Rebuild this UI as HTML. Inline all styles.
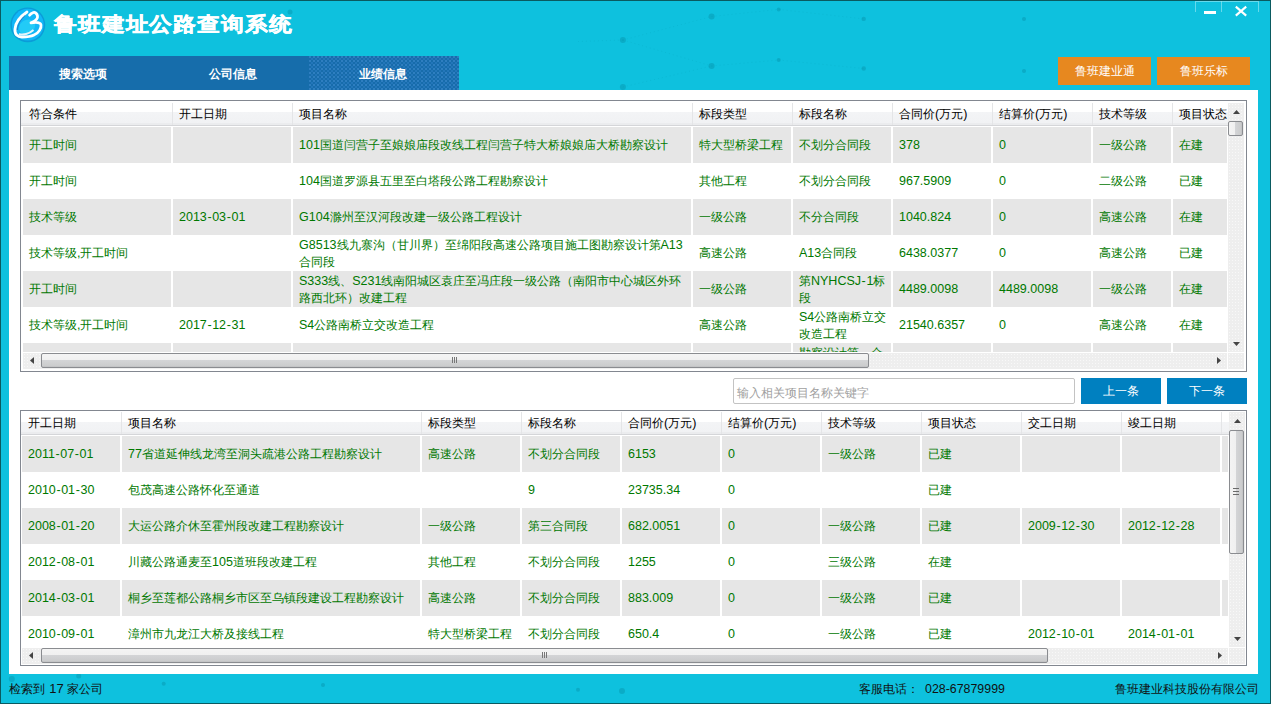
<!DOCTYPE html><html><head><meta charset="utf-8"><style>
*{margin:0;padding:0;box-sizing:border-box}
html,body{width:1271px;height:704px;overflow:hidden;background:#0ec1de}
body{position:relative;font-family:"Liberation Sans",sans-serif;font-size:12px;color:#000}
.abs{position:absolute}
.a{font-size:12.5px}
.hy{padding:0 0.6px}
.title{position:absolute;left:54px;top:13px;color:#fff;font-weight:bold;font-size:23px;letter-spacing:0.85px;line-height:26px;white-space:nowrap;transform:scale(1,0.88);transform-origin:0 0;-webkit-text-stroke:0.5px #fff}
.tab{position:absolute;top:56px;height:34px;width:150px;color:#fff;font-weight:bold;font-size:12px;line-height:37px;text-align:center;background:#166dab;text-indent:-2px}
.tab.sel{background-color:#176cab;background-image:radial-gradient(circle at 1px 1px,rgba(80,155,225,.55) 0.6px,transparent 1px),radial-gradient(circle at 3px 3px,rgba(60,140,215,.45) 0.6px,transparent 1px);background-size:4px 4px}
.obtn{position:absolute;top:57px;width:93px;height:28px;background:#e7881f;color:#fff;font-size:12px;line-height:28px;text-align:center}
.box{position:absolute;border:1px solid #828790;background:#fff}
.clip{position:absolute;overflow:hidden}
.hdr{position:absolute;background:linear-gradient(#fff 0,#fff 11px,#f3f4f6 11px,#f1f2f4 22px,#ebecee 22px,#ebecee 24px,#d5d6d9 24px,#d5d6d9 25px,#fff 25px)}
.hsep{position:absolute;width:1px;background:#e4e5e7}
.ht{position:absolute;white-space:nowrap;line-height:16px;color:#000}
.cell{position:absolute;background:#e6e6e6}
.ct{position:absolute;white-space:nowrap;line-height:16px;color:#007800}
.trk{position:absolute;background-color:#eeeeee;background-image:radial-gradient(circle,rgba(255,255,255,.6) 0.5px,transparent 0.9px);background-size:3px 3px;}
.thumbh{position:absolute;border:1px solid #8a8c90;border-radius:2px;background:linear-gradient(#f4f4f4 0,#f0f0f0 6px,#d4d5d7 6px,#cbcccd 12px,#bcbdbf 13px)}
.thumbv{position:absolute;border:1px solid #8a8c90;border-radius:2px;background:linear-gradient(90deg,#f4f4f4 0,#f0f0f0 6px,#d4d5d7 6px,#cbcccd 12px,#bcbdbf 13px)}
.status{position:absolute;top:681px;line-height:16px;color:#111;white-space:nowrap}
</style></head><body><div class="abs" style="left:0;top:0;width:1271px;height:704px;border:1px solid #0a5a60"></div><svg class="abs" style="left:0;top:0" width="1271" height="704"><circle cx="711.6" cy="16.5" r="3.0" fill="rgba(0,120,140,.28)"/><circle cx="622.9" cy="40.0" r="3.0" fill="rgba(0,120,140,.28)"/><circle cx="778.7" cy="9.4" r="2.0" fill="rgba(0,120,140,.28)"/><circle cx="863.7" cy="18.9" r="2.2" fill="rgba(0,120,140,.28)"/><circle cx="778.7" cy="60.0" r="2.0" fill="rgba(0,120,140,.28)"/><circle cx="711.6" cy="66.0" r="3.0" fill="rgba(0,120,140,.28)"/><circle cx="863.7" cy="68.5" r="2.2" fill="rgba(0,120,140,.28)"/><circle cx="622.9" cy="87.0" r="3.0" fill="rgba(0,120,140,.28)"/><circle cx="1024.0" cy="19.0" r="2.0" fill="rgba(0,120,140,.28)"/><circle cx="1024.0" cy="71.0" r="2.0" fill="rgba(0,120,140,.28)"/><circle cx="290.0" cy="12.0" r="2.5" fill="rgba(0,120,140,.28)"/><circle cx="163.7" cy="683.8" r="2.0" fill="rgba(0,120,140,.28)"/><circle cx="323.0" cy="685.0" r="2.0" fill="rgba(0,120,140,.28)"/><circle cx="622.0" cy="691.0" r="3.0" fill="rgba(0,120,140,.28)"/><circle cx="578.0" cy="689.7" r="2.0" fill="rgba(0,120,140,.28)"/><circle cx="11.8" cy="679.0" r="3.0" fill="rgba(0,120,140,.28)"/><circle cx="78.7" cy="676.0" r="2.5" fill="rgba(0,120,140,.28)"/><line x1="622.9" y1="40.0" x2="711.6" y2="16.5" stroke="rgba(0,120,140,.12)" stroke-width="1" stroke-dasharray="1 3"/><line x1="622.9" y1="40.0" x2="711.6" y2="66.0" stroke="rgba(0,120,140,.12)" stroke-width="1" stroke-dasharray="1 3"/><line x1="711.6" y1="16.5" x2="778.7" y2="9.4" stroke="rgba(0,120,140,.12)" stroke-width="1" stroke-dasharray="1 3"/><line x1="711.6" y1="66.0" x2="778.7" y2="60.0" stroke="rgba(0,120,140,.12)" stroke-width="1" stroke-dasharray="1 3"/><line x1="778.7" y1="9.4" x2="863.7" y2="18.9" stroke="rgba(0,120,140,.12)" stroke-width="1" stroke-dasharray="1 3"/><line x1="778.7" y1="60.0" x2="863.7" y2="68.5" stroke="rgba(0,120,140,.12)" stroke-width="1" stroke-dasharray="1 3"/><line x1="622.9" y1="40.0" x2="578.0" y2="41.5" stroke="rgba(0,120,140,.12)" stroke-width="1" stroke-dasharray="1 3"/><line x1="622.9" y1="87.0" x2="711.6" y2="66.0" stroke="rgba(0,120,140,.12)" stroke-width="1" stroke-dasharray="1 3"/></svg><svg class="abs" style="left:8px;top:6px" width="40" height="38" viewBox="0 0 40 38">
<circle cx="19.8" cy="18.9" r="17.4" fill="#0b9cd8"/>
<circle cx="19.8" cy="18.7" r="15.9" fill="#12b7f7"/>
<ellipse cx="19" cy="21" rx="8.5" ry="7" fill="#22cbf7" transform="rotate(-35 19 21)"/>
<path d="M19,6 C13,10 7.5,16 7,23 C6.5,28.5 9.5,31 14,31 C19,31 23,30.5 26,29 C31,27 33.5,22 33,19 C32.5,16.5 28,16 23,16.8 C26.5,15.5 30,13 29.5,10 C29,7.5 27,6 25.4,6.5 C24,7 22.5,8 21.6,9.2" stroke="#fff" stroke-width="2.8" fill="none" stroke-linecap="round" stroke-linejoin="round"/>
<path d="M9.3,24 C9.8,19 12.5,13.5 17,9.5" stroke="#3a4f9a" stroke-width="0.8" fill="none" opacity="0.7"/>
<path d="M11,28 C15,29.5 21,28 25.5,24" stroke="#e4f4fa" stroke-width="2" fill="none"/>
</svg><div class="title">鲁班建址公路查询系统</div><div class="abs" style="left:1195px;top:1px;width:64px;height:11px;border:1px solid rgba(160,235,245,.6);border-bottom:none"></div><div class="abs" style="left:1221px;top:1px;width:1px;height:11px;background:rgba(160,235,245,.6)"></div><div class="abs" style="left:1204px;top:11px;width:12px;height:3px;background:#fff"></div><svg class="abs" style="left:1234px;top:5px" width="14" height="12" viewBox="0 0 14 12"><path d="M1.8 1.6 L12.2 10.6 M12.2 1.6 L1.8 10.6" stroke="#fff" stroke-width="2.1"/></svg><div class="tab" style="left:9px">搜索选项</div><div class="tab" style="left:159px">公司信息</div><div class="tab sel" style="left:309px">业绩信息</div><div class="obtn" style="left:1058px">鲁班建业通</div><div class="obtn" style="left:1157px">鲁班乐标</div><div class="abs" style="left:9px;top:90px;width:1249px;height:584px;background:#fff"></div><div class="box" style="left:20px;top:100px;width:1227px;height:272px"></div><div class="abs" style="left:21px;top:101px;width:1207px;height:26px;background:linear-gradient(#fff 0,#fff 11px,#f3f4f6 11px,#f1f2f4 22px,#ebecee 22px,#ebecee 24px,#d5d6d9 24px,#d5d6d9 25px,#fff 25px)"></div><div class="ht" style="left:29px;top:106px">符合条件</div><div class="hsep" style="left:172px;top:103px;height:22px"></div><div class="ht" style="left:179px;top:106px">开工日期</div><div class="hsep" style="left:292px;top:103px;height:22px"></div><div class="ht" style="left:299px;top:106px">项目名称</div><div class="hsep" style="left:692px;top:103px;height:22px"></div><div class="ht" style="left:699px;top:106px">标段类型</div><div class="hsep" style="left:792px;top:103px;height:22px"></div><div class="ht" style="left:799px;top:106px">标段名称</div><div class="hsep" style="left:892px;top:103px;height:22px"></div><div class="ht" style="left:899px;top:106px">合同价<span class="a">(</span>万元<span class="a">)</span></div><div class="hsep" style="left:992px;top:103px;height:22px"></div><div class="ht" style="left:999px;top:106px">结算价<span class="a">(</span>万元<span class="a">)</span></div><div class="hsep" style="left:1092px;top:103px;height:22px"></div><div class="ht" style="left:1099px;top:106px">技术等级</div><div class="hsep" style="left:1172px;top:103px;height:22px"></div><div class="ht" style="left:1179px;top:106px">项目状态</div><div class="clip" style="left:21px;top:127px;width:1206px;height:225px"><div class="cell" style="left:2px;top:0px;width:148px;height:36px"></div><div class="ct" style="left:8px;top:10px">开工时间</div><div class="cell" style="left:152px;top:0px;width:118px;height:36px"></div><div class="cell" style="left:272px;top:0px;width:398px;height:36px"></div><div class="ct" style="left:278px;top:10px"><span class="a">101</span>国道闫营子至娘娘庙段改线工程闫营子特大桥娘娘庙大桥勘察设计</div><div class="cell" style="left:672px;top:0px;width:98px;height:36px"></div><div class="ct" style="left:678px;top:10px">特大型桥梁工程</div><div class="cell" style="left:772px;top:0px;width:98px;height:36px"></div><div class="ct" style="left:778px;top:10px">不划分合同段</div><div class="cell" style="left:872px;top:0px;width:98px;height:36px"></div><div class="ct" style="left:878px;top:10px"><span class="a">378</span></div><div class="cell" style="left:972px;top:0px;width:98px;height:36px"></div><div class="ct" style="left:978px;top:10px"><span class="a">0</span></div><div class="cell" style="left:1072px;top:0px;width:78px;height:36px"></div><div class="ct" style="left:1078px;top:10px">一级公路</div><div class="cell" style="left:1152px;top:0px;width:78px;height:36px"></div><div class="ct" style="left:1158px;top:10px">在建</div><div class="ct" style="left:8px;top:46px">开工时间</div><div class="ct" style="left:278px;top:46px"><span class="a">104</span>国道罗源县五里至白塔段公路工程勘察设计</div><div class="ct" style="left:678px;top:46px">其他工程</div><div class="ct" style="left:778px;top:46px">不划分合同段</div><div class="ct" style="left:878px;top:46px"><span class="a">967.5909</span></div><div class="ct" style="left:978px;top:46px"><span class="a">0</span></div><div class="ct" style="left:1078px;top:46px">二级公路</div><div class="ct" style="left:1158px;top:46px">已建</div><div class="cell" style="left:2px;top:72px;width:148px;height:36px"></div><div class="ct" style="left:8px;top:82px">技术等级</div><div class="cell" style="left:152px;top:72px;width:118px;height:36px"></div><div class="ct" style="left:158px;top:82px"><span class="a">2013<span class="hy">-</span>03<span class="hy">-</span>01</span></div><div class="cell" style="left:272px;top:72px;width:398px;height:36px"></div><div class="ct" style="left:278px;top:82px"><span class="a">G104</span>滁州至汉河段改建一级公路工程设计</div><div class="cell" style="left:672px;top:72px;width:98px;height:36px"></div><div class="ct" style="left:678px;top:82px">一级公路</div><div class="cell" style="left:772px;top:72px;width:98px;height:36px"></div><div class="ct" style="left:778px;top:82px">不分合同段</div><div class="cell" style="left:872px;top:72px;width:98px;height:36px"></div><div class="ct" style="left:878px;top:82px"><span class="a">1040.824</span></div><div class="cell" style="left:972px;top:72px;width:98px;height:36px"></div><div class="ct" style="left:978px;top:82px"><span class="a">0</span></div><div class="cell" style="left:1072px;top:72px;width:78px;height:36px"></div><div class="ct" style="left:1078px;top:82px">高速公路</div><div class="cell" style="left:1152px;top:72px;width:78px;height:36px"></div><div class="ct" style="left:1158px;top:82px">在建</div><div class="ct" style="left:8px;top:118px">技术等级<span class="a">,</span>开工时间</div><div class="ct" style="left:278px;top:110px"><span class="a">G8513</span>线九寨沟（甘川界）至绵阳段高速公路项目施工图勘察设计第<span class="a">A13</span></div><div class="ct" style="left:278px;top:127px">合同段</div><div class="ct" style="left:678px;top:118px">高速公路</div><div class="ct" style="left:778px;top:118px"><span class="a">A13</span>合同段</div><div class="ct" style="left:878px;top:118px"><span class="a">6438.0377</span></div><div class="ct" style="left:978px;top:118px"><span class="a">0</span></div><div class="ct" style="left:1078px;top:118px">高速公路</div><div class="ct" style="left:1158px;top:118px">已建</div><div class="cell" style="left:2px;top:144px;width:148px;height:36px"></div><div class="ct" style="left:8px;top:154px">开工时间</div><div class="cell" style="left:152px;top:144px;width:118px;height:36px"></div><div class="cell" style="left:272px;top:144px;width:398px;height:36px"></div><div class="ct" style="left:278px;top:146px"><span class="a">S333</span>线、<span class="a">S231</span>线南阳城区袁庄至冯庄段一级公路（南阳市中心城区外环</div><div class="ct" style="left:278px;top:163px">路西北环）改建工程</div><div class="cell" style="left:672px;top:144px;width:98px;height:36px"></div><div class="ct" style="left:678px;top:154px">一级公路</div><div class="cell" style="left:772px;top:144px;width:98px;height:36px"></div><div class="ct" style="left:778px;top:146px">第<span class="a">NYHCSJ<span class="hy">-</span>1</span>标</div><div class="ct" style="left:778px;top:163px">段</div><div class="cell" style="left:872px;top:144px;width:98px;height:36px"></div><div class="ct" style="left:878px;top:154px"><span class="a">4489.0098</span></div><div class="cell" style="left:972px;top:144px;width:98px;height:36px"></div><div class="ct" style="left:978px;top:154px"><span class="a">4489.0098</span></div><div class="cell" style="left:1072px;top:144px;width:78px;height:36px"></div><div class="ct" style="left:1078px;top:154px">一级公路</div><div class="cell" style="left:1152px;top:144px;width:78px;height:36px"></div><div class="ct" style="left:1158px;top:154px">在建</div><div class="ct" style="left:8px;top:190px">技术等级<span class="a">,</span>开工时间</div><div class="ct" style="left:158px;top:190px"><span class="a">2017<span class="hy">-</span>12<span class="hy">-</span>31</span></div><div class="ct" style="left:278px;top:190px"><span class="a">S4</span>公路南桥立交改造工程</div><div class="ct" style="left:678px;top:190px">高速公路</div><div class="ct" style="left:778px;top:182px"><span class="a">S4</span>公路南桥立交</div><div class="ct" style="left:778px;top:199px">改造工程</div><div class="ct" style="left:878px;top:190px"><span class="a">21540.6357</span></div><div class="ct" style="left:978px;top:190px"><span class="a">0</span></div><div class="ct" style="left:1078px;top:190px">高速公路</div><div class="ct" style="left:1158px;top:190px">在建</div><div class="cell" style="left:2px;top:216px;width:148px;height:36px"></div><div class="cell" style="left:152px;top:216px;width:118px;height:36px"></div><div class="cell" style="left:272px;top:216px;width:398px;height:36px"></div><div class="cell" style="left:672px;top:216px;width:98px;height:36px"></div><div class="cell" style="left:772px;top:216px;width:98px;height:36px"></div><div class="ct" style="left:778px;top:218px">勘察设计第一合</div><div class="ct" style="left:778px;top:235px">同段</div><div class="cell" style="left:872px;top:216px;width:98px;height:36px"></div><div class="cell" style="left:972px;top:216px;width:98px;height:36px"></div><div class="cell" style="left:1072px;top:216px;width:78px;height:36px"></div><div class="cell" style="left:1152px;top:216px;width:78px;height:36px"></div></div><div class="trk" style="left:1228px;top:103px;width:16px;height:249px"></div><svg class="abs" style="left:1233px;top:110px" width="7" height="4"><polygon points="0,4 3.5,0 7,4" fill="#444"/></svg><svg class="abs" style="left:1233px;top:342px" width="7" height="4"><polygon points="0,0 7,0 3.5,4" fill="#444"/></svg><div class="thumbv" style="left:1228px;top:121px;width:15px;height:15px"></div><div class="trk" style="left:23px;top:353px;width:1204px;height:16px"></div><svg class="abs" style="left:30px;top:357px" width="4" height="7"><polygon points="4,0 4,7 0,3.5" fill="#444"/></svg><svg class="abs" style="left:1217px;top:357px" width="4" height="7"><polygon points="0,0 0,7 4,3.5" fill="#444"/></svg><div class="thumbh" style="left:41px;top:353px;width:828px;height:15px"></div><div class="abs" style="left:452px;top:357px;width:5px;height:6px;border-left:1px solid #777;border-right:1px solid #777"></div><div class="abs" style="left:454px;top:357px;width:1px;height:6px;background:#777"></div><div class="trk" style="left:1228px;top:353px;width:16px;height:16px"></div><div class="box" style="left:20px;top:410px;width:1227px;height:256px"></div><div class="abs" style="left:21px;top:411px;width:1208px;height:25px;background:linear-gradient(#fff 0,#fff 11px,#f3f4f6 11px,#f1f2f4 21px,#ebecee 21px,#ebecee 23px,#d5d6d9 23px,#d5d6d9 24px,#fff 24px)"></div><div class="ht" style="left:28px;top:415px">开工日期</div><div class="hsep" style="left:121px;top:412px;height:22px"></div><div class="ht" style="left:128px;top:415px">项目名称</div><div class="hsep" style="left:421px;top:412px;height:22px"></div><div class="ht" style="left:428px;top:415px">标段类型</div><div class="hsep" style="left:521px;top:412px;height:22px"></div><div class="ht" style="left:528px;top:415px">标段名称</div><div class="hsep" style="left:621px;top:412px;height:22px"></div><div class="ht" style="left:628px;top:415px">合同价<span class="a">(</span>万元<span class="a">)</span></div><div class="hsep" style="left:721px;top:412px;height:22px"></div><div class="ht" style="left:728px;top:415px">结算价<span class="a">(</span>万元<span class="a">)</span></div><div class="hsep" style="left:821px;top:412px;height:22px"></div><div class="ht" style="left:828px;top:415px">技术等级</div><div class="hsep" style="left:921px;top:412px;height:22px"></div><div class="ht" style="left:928px;top:415px">项目状态</div><div class="hsep" style="left:1021px;top:412px;height:22px"></div><div class="ht" style="left:1028px;top:415px">交工日期</div><div class="hsep" style="left:1121px;top:412px;height:22px"></div><div class="ht" style="left:1128px;top:415px">竣工日期</div><div class="hsep" style="left:1221px;top:412px;height:22px"></div><div class="clip" style="left:21px;top:436px;width:1207px;height:211px"><div class="cell" style="left:1px;top:0px;width:98px;height:36px"></div><div class="ct" style="left:7px;top:10px"><span class="a">2011<span class="hy">-</span>07<span class="hy">-</span>01</span></div><div class="cell" style="left:101px;top:0px;width:298px;height:36px"></div><div class="ct" style="left:107px;top:10px"><span class="a">77</span>省道延伸线龙湾至洞头疏港公路工程勘察设计</div><div class="cell" style="left:401px;top:0px;width:98px;height:36px"></div><div class="ct" style="left:407px;top:10px">高速公路</div><div class="cell" style="left:501px;top:0px;width:98px;height:36px"></div><div class="ct" style="left:507px;top:10px">不划分合同段</div><div class="cell" style="left:601px;top:0px;width:98px;height:36px"></div><div class="ct" style="left:607px;top:10px"><span class="a">6153</span></div><div class="cell" style="left:701px;top:0px;width:98px;height:36px"></div><div class="ct" style="left:707px;top:10px"><span class="a">0</span></div><div class="cell" style="left:801px;top:0px;width:98px;height:36px"></div><div class="ct" style="left:807px;top:10px">一级公路</div><div class="cell" style="left:901px;top:0px;width:98px;height:36px"></div><div class="ct" style="left:907px;top:10px">已建</div><div class="cell" style="left:1001px;top:0px;width:98px;height:36px"></div><div class="cell" style="left:1101px;top:0px;width:98px;height:36px"></div><div class="cell" style="left:1201px;top:0px;width:98px;height:36px"></div><div class="ct" style="left:7px;top:46px"><span class="a">2010<span class="hy">-</span>01<span class="hy">-</span>30</span></div><div class="ct" style="left:107px;top:46px">包茂高速公路怀化至通道</div><div class="ct" style="left:507px;top:46px"><span class="a">9</span></div><div class="ct" style="left:607px;top:46px"><span class="a">23735.34</span></div><div class="ct" style="left:707px;top:46px"><span class="a">0</span></div><div class="ct" style="left:907px;top:46px">已建</div><div class="cell" style="left:1px;top:72px;width:98px;height:36px"></div><div class="ct" style="left:7px;top:82px"><span class="a">2008<span class="hy">-</span>01<span class="hy">-</span>20</span></div><div class="cell" style="left:101px;top:72px;width:298px;height:36px"></div><div class="ct" style="left:107px;top:82px">大运公路介休至霍州段改建工程勘察设计</div><div class="cell" style="left:401px;top:72px;width:98px;height:36px"></div><div class="ct" style="left:407px;top:82px">一级公路</div><div class="cell" style="left:501px;top:72px;width:98px;height:36px"></div><div class="ct" style="left:507px;top:82px">第三合同段</div><div class="cell" style="left:601px;top:72px;width:98px;height:36px"></div><div class="ct" style="left:607px;top:82px"><span class="a">682.0051</span></div><div class="cell" style="left:701px;top:72px;width:98px;height:36px"></div><div class="ct" style="left:707px;top:82px"><span class="a">0</span></div><div class="cell" style="left:801px;top:72px;width:98px;height:36px"></div><div class="ct" style="left:807px;top:82px">一级公路</div><div class="cell" style="left:901px;top:72px;width:98px;height:36px"></div><div class="ct" style="left:907px;top:82px">已建</div><div class="cell" style="left:1001px;top:72px;width:98px;height:36px"></div><div class="ct" style="left:1007px;top:82px"><span class="a">2009<span class="hy">-</span>12<span class="hy">-</span>30</span></div><div class="cell" style="left:1101px;top:72px;width:98px;height:36px"></div><div class="ct" style="left:1107px;top:82px"><span class="a">2012<span class="hy">-</span>12<span class="hy">-</span>28</span></div><div class="cell" style="left:1201px;top:72px;width:98px;height:36px"></div><div class="ct" style="left:7px;top:118px"><span class="a">2012<span class="hy">-</span>08<span class="hy">-</span>01</span></div><div class="ct" style="left:107px;top:118px">川藏公路通麦至<span class="a">105</span>道班段改建工程</div><div class="ct" style="left:407px;top:118px">其他工程</div><div class="ct" style="left:507px;top:118px">不划分合同段</div><div class="ct" style="left:607px;top:118px"><span class="a">1255</span></div><div class="ct" style="left:707px;top:118px"><span class="a">0</span></div><div class="ct" style="left:807px;top:118px">三级公路</div><div class="ct" style="left:907px;top:118px">在建</div><div class="cell" style="left:1px;top:144px;width:98px;height:36px"></div><div class="ct" style="left:7px;top:154px"><span class="a">2014<span class="hy">-</span>03<span class="hy">-</span>01</span></div><div class="cell" style="left:101px;top:144px;width:298px;height:36px"></div><div class="ct" style="left:107px;top:154px">桐乡至莲都公路桐乡市区至乌镇段建设工程勘察设计</div><div class="cell" style="left:401px;top:144px;width:98px;height:36px"></div><div class="ct" style="left:407px;top:154px">高速公路</div><div class="cell" style="left:501px;top:144px;width:98px;height:36px"></div><div class="ct" style="left:507px;top:154px">不划分合同段</div><div class="cell" style="left:601px;top:144px;width:98px;height:36px"></div><div class="ct" style="left:607px;top:154px"><span class="a">883.009</span></div><div class="cell" style="left:701px;top:144px;width:98px;height:36px"></div><div class="ct" style="left:707px;top:154px"><span class="a">0</span></div><div class="cell" style="left:801px;top:144px;width:98px;height:36px"></div><div class="ct" style="left:807px;top:154px">一级公路</div><div class="cell" style="left:901px;top:144px;width:98px;height:36px"></div><div class="ct" style="left:907px;top:154px">已建</div><div class="cell" style="left:1001px;top:144px;width:98px;height:36px"></div><div class="cell" style="left:1101px;top:144px;width:98px;height:36px"></div><div class="cell" style="left:1201px;top:144px;width:98px;height:36px"></div><div class="ct" style="left:7px;top:190px"><span class="a">2010<span class="hy">-</span>09<span class="hy">-</span>01</span></div><div class="ct" style="left:107px;top:190px">漳州市九龙江大桥及接线工程</div><div class="ct" style="left:407px;top:190px">特大型桥梁工程</div><div class="ct" style="left:507px;top:190px">不划分合同段</div><div class="ct" style="left:607px;top:190px"><span class="a">650.4</span></div><div class="ct" style="left:707px;top:190px"><span class="a">0</span></div><div class="ct" style="left:807px;top:190px">一级公路</div><div class="ct" style="left:907px;top:190px">已建</div><div class="ct" style="left:1007px;top:190px"><span class="a">2012<span class="hy">-</span>10<span class="hy">-</span>01</span></div><div class="ct" style="left:1107px;top:190px"><span class="a">2014<span class="hy">-</span>01<span class="hy">-</span>01</span></div></div><div class="trk" style="left:1229px;top:412px;width:16px;height:235px"></div><svg class="abs" style="left:1234px;top:419px" width="7" height="4"><polygon points="0,4 3.5,0 7,4" fill="#444"/></svg><svg class="abs" style="left:1234px;top:637px" width="7" height="4"><polygon points="0,0 7,0 3.5,4" fill="#444"/></svg><div class="thumbv" style="left:1229px;top:430px;width:15px;height:124px"></div><div class="abs" style="left:1233px;top:488px;width:6px;height:1px;background:#6a6a6a"></div><div class="abs" style="left:1233px;top:491px;width:6px;height:1px;background:#6a6a6a"></div><div class="abs" style="left:1233px;top:494px;width:6px;height:1px;background:#6a6a6a"></div><div class="trk" style="left:22px;top:648px;width:1206px;height:16px"></div><svg class="abs" style="left:29px;top:652px" width="4" height="7"><polygon points="4,0 4,7 0,3.5" fill="#444"/></svg><svg class="abs" style="left:1218px;top:652px" width="4" height="7"><polygon points="0,0 0,7 4,3.5" fill="#444"/></svg><div class="thumbh" style="left:41px;top:648px;width:1007px;height:15px"></div><div class="abs" style="left:542px;top:652px;width:5px;height:6px;border-left:1px solid #777;border-right:1px solid #777"></div><div class="abs" style="left:544px;top:652px;width:1px;height:6px;background:#777"></div><div class="trk" style="left:1229px;top:648px;width:16px;height:16px"></div><div class="abs" style="left:733px;top:378px;width:342px;height:26px;border:1px solid #c3c3c3;border-radius:2px;background:#fff"></div><div class="abs" style="left:737px;top:385px;color:#a0a0a0;line-height:16px;white-space:nowrap">输入相关项目名称关键字</div><div class="abs" style="left:1081px;top:378px;width:80px;height:26px;background:#0080c0;color:#fff;text-align:center;line-height:26px">上一条</div><div class="abs" style="left:1167px;top:378px;width:80px;height:26px;background:#0080c0;color:#fff;text-align:center;line-height:26px">下一条</div><div class="status" style="left:9px">检索到 <span style="font-size:13px;margin-left:1px">17</span> 家公司</div><div class="status" style="left:859px">客服电话：<span style="font-size:12.4px;margin-left:6px">028-67879999</span></div><div class="status" style="left:1115px">鲁班建业科技股份有限公司</div></body></html>
